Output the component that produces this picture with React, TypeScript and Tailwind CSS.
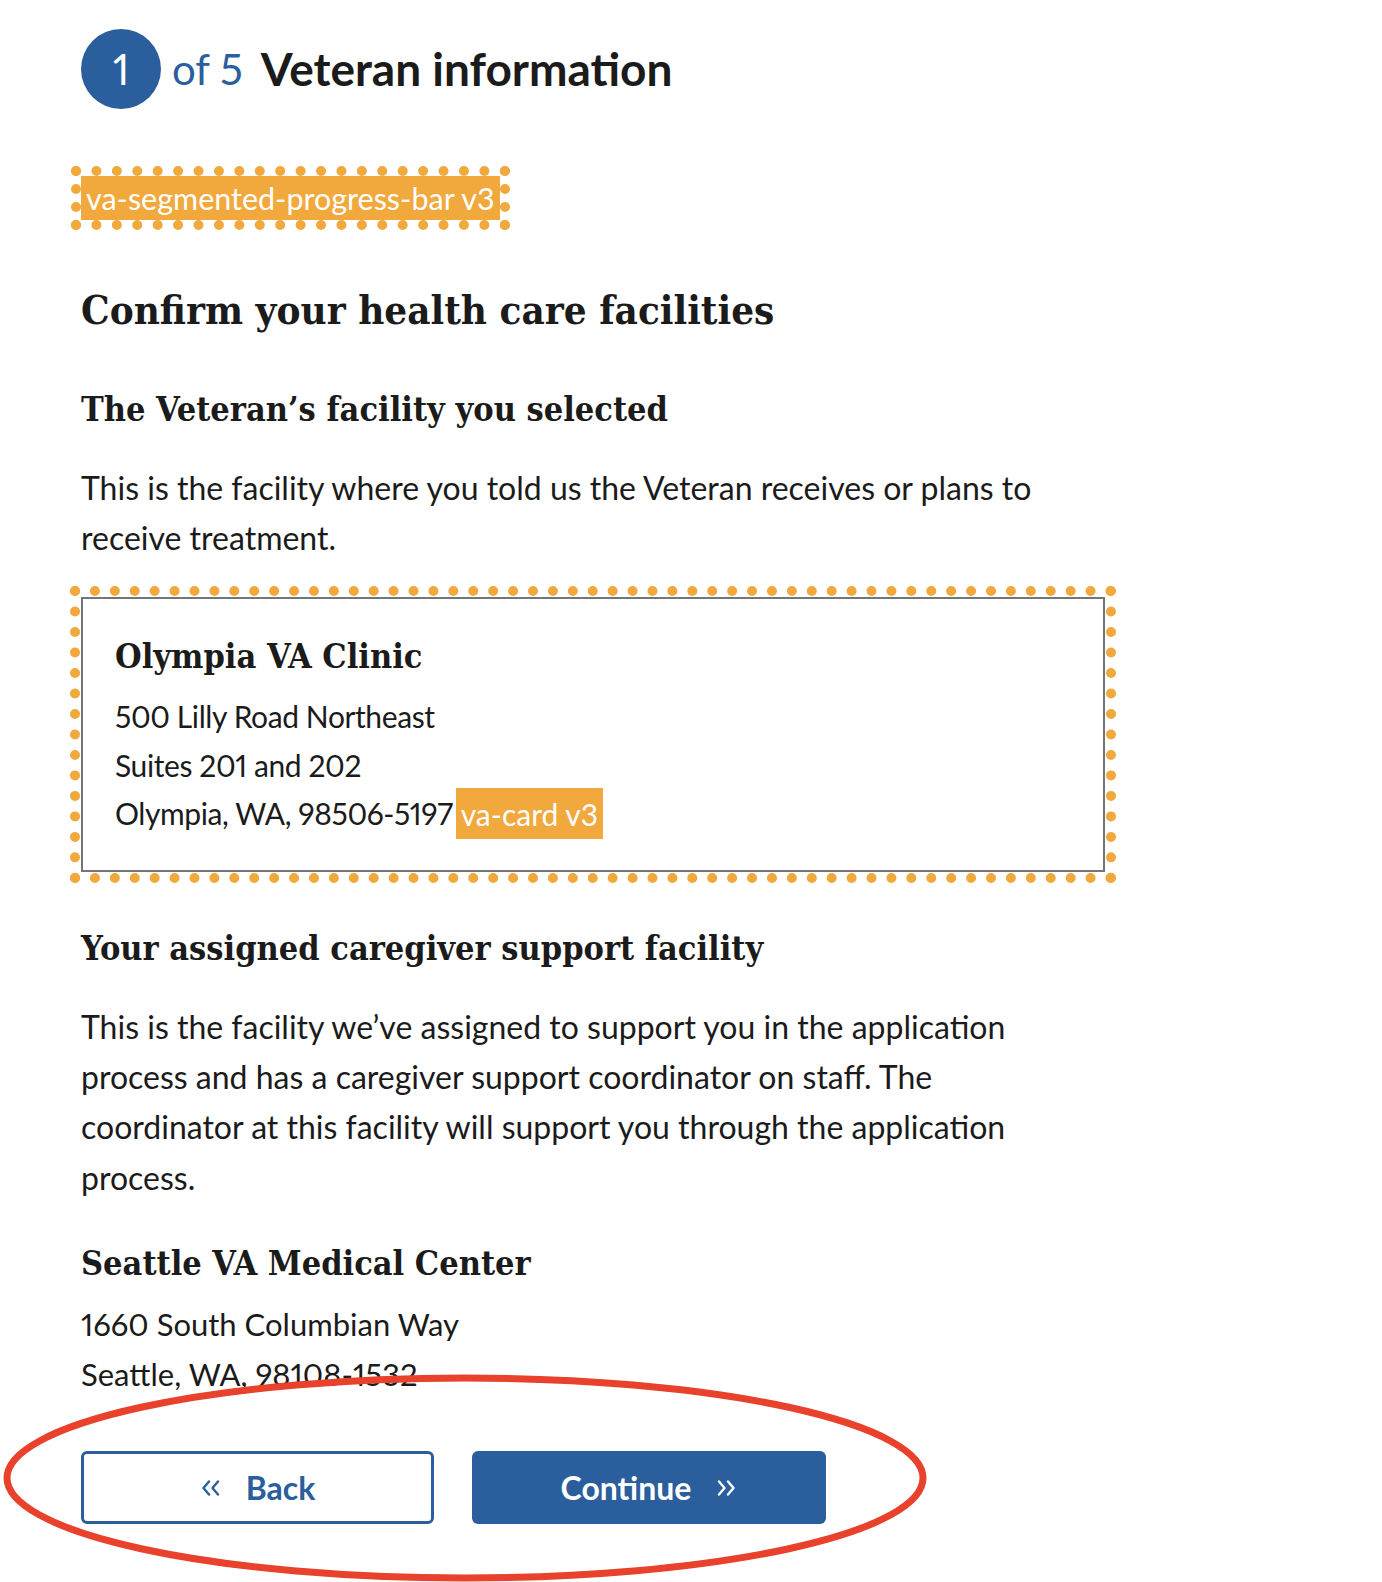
import React from 'react';

const Chevrons: React.FC<{ dir: 'left' | 'right'; className?: string }> = ({ dir, className }) => (
  <svg viewBox="0 0 22 16" width={22} height={16} className={className} fill="none" stroke="currentColor" strokeWidth={2.4} strokeLinecap="round" strokeLinejoin="round">
    {dir === 'left' ? (
      <>
        <path d="M9 1.5 L3.5 8 L9 14.5" />
        <path d="M18 1.5 L12.5 8 L18 14.5" />
      </>
    ) : (
      <>
        <path d="M4 1.5 L9.5 8 L4 14.5" />
        <path d="M13 1.5 L18.5 8 L13 14.5" />
      </>
    )}
  </svg>
);

const heading = "font-['DejaVu_Serif',serif] font-stretch-condensed font-bold text-[#1b1b1b]";

export default function App() {
  return (
    <div className="relative min-h-[1582px] w-full bg-white font-['Lato','Noto_Sans',sans-serif] text-[#1b1b1b] proportional-nums">
      <div className="px-[81px] pt-[29px] max-w-[1186px]">
        {/* step header */}
        <div className="flex items-center h-[80px]">
          <div className="w-[80px] h-[80px] rounded-full bg-[#2a5e9d] text-white flex items-center justify-center text-[42px] leading-none">
            1
          </div>
          <span className="ml-[11px] text-[42px] leading-none text-[#2a5e9d]">of 5</span>
          <span className="ml-[18px] text-[46px] leading-none font-bold">Veteran information</span>
        </div>

        <div className="mt-[67px]">
          <span className="inline-flex items-center h-[44px] px-[5px] bg-[#f1a83d] text-white text-[30.5px] leading-none outline-dotted outline-[length:10px] outline-[#f1a83d]">
            va-segmented-progress-bar v3
          </span>
        </div>

        <h1 className={`${heading} mt-[70px] text-[40px] leading-[40px]`}>Confirm your health care facilities</h1>

        <h3 className={`${heading} mt-[61px] text-[34px] leading-[36px]`}>The Veteran’s facility you selected</h3>
        <p className="mt-[36px] max-w-[965px] text-[32px] leading-[50px]">
          This is the facility where you told us the Veteran receives or plans to receive treatment.
        </p>

        {/* va-card */}
        <div className="mt-[34px] border-2 border-[#757575] px-[32px] pt-[34px] pb-[32px] outline-dotted outline-[length:10px] outline-[#f1a83d] outline-offset-[1px]">
          <h3 className={`${heading} text-[34px] leading-[46px]`}>Olympia VA Clinic</h3>
          <div className="mt-[13px] text-[30px] leading-[48.5px] tracking-[-0.4px]">
            <p>500 Lilly Road Northeast</p>
            <p>Suites 201 and 202</p>
            <p>
              Olympia, WA, 98506-5197
              <span className="ml-[3px] bg-[#f1a83d] text-white px-[5px] py-[7.5px] tracking-normal">va-card v3</span>
            </p>
          </div>
        </div>

        <h3 className={`${heading} mt-[58px] text-[34px] leading-[36px]`}>Your assigned caregiver support facility</h3>
        <p className="mt-[36px] max-w-[965px] text-[32px] leading-[50.4px]">
          This is the facility we’ve assigned to support you in the application process and has a caregiver support
          coordinator on staff. The coordinator at this facility will support you through the application process.
        </p>

        <h4 className={`${heading} mt-[42px] text-[34px] leading-[36px]`}>Seattle VA Medical Center</h4>
        <div className="mt-[18px] text-[31px] leading-[50px]">
          <p>1660 South Columbian Way</p>
          <p>Seattle, WA, 98108-1532</p>
        </div>

        {/* form nav */}
        <div className="mt-[52px] flex gap-[38px]">
          <button className="w-[353px] h-[73px] rounded-[6px] border-[3px] border-[#2a5e9d] bg-white text-[#2a5e9d] flex items-center justify-center gap-[24px] text-[32px] font-bold">
            <Chevrons dir="left" />
            <span>Back</span>
          </button>
          <button className="w-[354px] h-[73px] rounded-[6px] bg-[#2a5e9d] text-white flex items-center justify-center gap-[24px] text-[32px] font-bold">
            <span>Continue</span>
            <Chevrons dir="right" />
          </button>
        </div>
      </div>

      {/* annotation */}
      <svg className="absolute left-0 top-[1370px] pointer-events-none" width={940} height={215} viewBox="0 0 940 215">
        <ellipse cx={465} cy={108} rx={458} ry={100} fill="none" stroke="#e8412c" strokeWidth={7} />
      </svg>
    </div>
  );
}
